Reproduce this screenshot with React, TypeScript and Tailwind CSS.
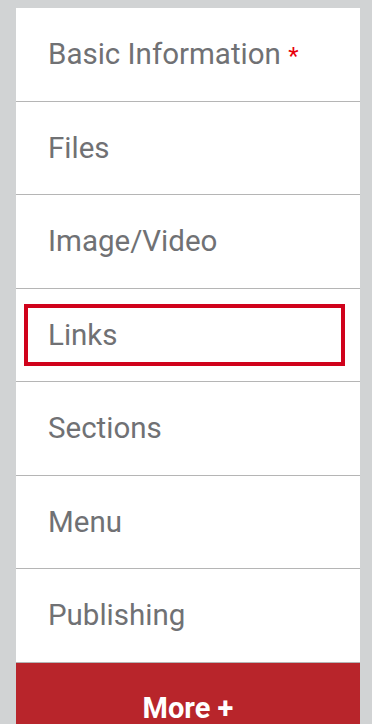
const items = ['Basic Information', 'Files', 'Image/Video', 'Links', 'Sections', 'Menu', 'Publishing']

export default function App() {
  return (
    <div
      className="min-h-screen bg-[#d1d3d4] pl-4 pr-3 pt-2"
      style={{ fontFamily: 'Roboto, "Liberation Sans", sans-serif' }}
    >
      <nav className="bg-white">
        <ul>
          {items.map((label, i) => (
            <li key={label} className="h-[93.5px] border-b border-[#b5b5b5] flex items-center">
              {label === 'Links' ? (
                <div className="ml-2 mr-[15px] h-[62px] w-full border-4 border-[#d0021b] flex items-center pl-5">
                  <span className="text-[29.5px] text-[#707174]">{label}</span>
                </div>
              ) : (
                <span className="pl-8 text-[29.5px] text-[#707174]">
                  {label}
                  {i === 0 && (
                    <>
                      {' '}
                      <span className="text-[24px] text-[#e8000b]">*</span>
                    </>
                  )}
                </span>
              )}
            </li>
          ))}
        </ul>
        <button className="w-full h-[93px] bg-[#b8252b] text-white text-[29px] font-bold">
          More +
        </button>
      </nav>
    </div>
  )
}
